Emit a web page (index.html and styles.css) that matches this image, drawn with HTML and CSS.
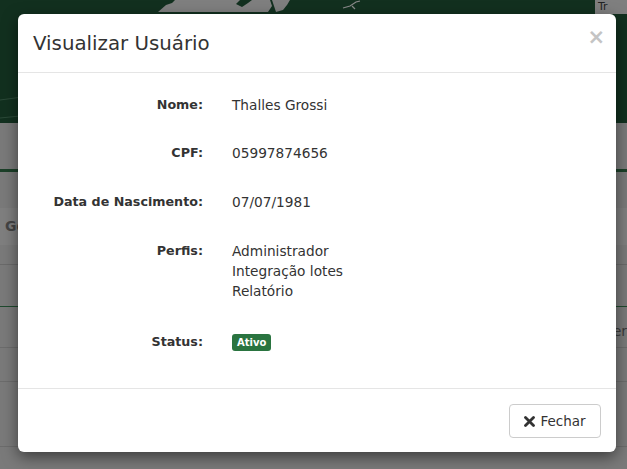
FILE: index.html
```html
<!DOCTYPE html>
<html lang="pt-BR">
<head>
<meta charset="utf-8">
<title>Visualizar Usuário</title>
<link rel="stylesheet" href="styles.css">
</head>
<body>
<div class="page">
  <header class="hero">
    <svg class="map" width="627" height="123" viewBox="0 0 627 123">
      <path d="M158 12 L166 5 L172 3 L175 0 L240 0 L236 4 L242 7 L248 3 L252 0 L270 0 L272 6 L268 12 Z" fill="#7f7f7f"/>
      <path d="M272 0 L290 0 L287 5 L283 10 L276 12 L274 6 Z" fill="#7f7f7f"/>
      <path d="M343 8 L350 6 L356 2 L360 1 M352 6 L355 9" stroke="#8a8a8a" stroke-width="1.2" fill="none"/>
      <path d="M0 100 L30 96 M0 118 L20 116" stroke="#2c4a39" stroke-width="1" fill="none"/>
    </svg>
    <div class="tab">Tr</div>
  </header>
  <div class="strip"></div>
  <div class="navline"></div>
  <div class="gap1"></div>
  <div class="thead">Ge</div>
  <div class="row r1"></div>
  <div class="row r2 green"></div>
  <div class="row r3"><span class="cell-r">er</span></div>
  <div class="row r4"></div>
  <div class="row r5"></div>
</div>

<div class="modal">
  <div class="modal-header">
    <h4 class="modal-title">Visualizar Usuário</h4>
    <span class="close">×</span>
  </div>
  <div class="modal-body">
    <div class="field">
      <div class="label">Nome:</div>
      <div class="value">Thalles Grossi</div>
    </div>
    <div class="field">
      <div class="label">CPF:</div>
      <div class="value">05997874656</div>
    </div>
    <div class="field">
      <div class="label">Data de Nascimento:</div>
      <div class="value">07/07/1981</div>
    </div>
    <div class="field">
      <div class="label">Perfis:</div>
      <div class="value">Administrador<br>Integração lotes<br>Relatório</div>
    </div>
    <div class="field field-status">
      <div class="label">Status:</div>
      <div class="value"><span class="badge">Ativo</span></div>
    </div>
  </div>
  <div class="modal-footer">
    <button class="btn" type="button">
      <svg class="btn-icon" width="11" height="11" viewBox="0 0 11 11"><path d="M1.5 1.5 L9.5 9.5 M9.5 1.5 L1.5 9.5" stroke="#333" stroke-width="2.8" stroke-linecap="round"/></svg>
      Fechar
    </button>
  </div>
</div>
</body>
</html>
```

FILE: styles.css
```css
* { box-sizing: border-box; }
html, body { margin: 0; padding: 0; }
body {
  width: 627px;
  height: 469px;
  overflow: hidden;
  background: #7a7a7a;
  font-family: "DejaVu Sans", sans-serif;
  color: #333;
  position: relative;
}
.page { display: flex; flex-direction: column; }
.hero {
  height: 123px;
  background: #12301f;
  position: relative;
}
.map { display: block; }
.tab {
  position: absolute;
  right: 0;
  top: 0;
  width: 32px;
  height: 14px;
  background: #7f7f7f;
  color: #222;
  font-size: 11px;
  line-height: 13px;
  padding-left: 3px;
}
.strip { height: 46px; background: #7a7a7a; }
.navline { height: 3px; background: #1c4029; }
.gap1 { height: 36px; background: #7a7a7a; }
.thead {
  height: 37px;
  background: #7f7f7f;
  color: #444;
  font-weight: bold;
  font-size: 14px;
  line-height: 37px;
  padding-left: 5px;
}
.row { border-bottom: 1px solid #6c6c6c; position: relative; }
.r1 { height: 20px; border-bottom-color: #6a6a6a; }
.r2 { height: 42px; border-bottom: 1px solid #1f4a2e; }
.r3 { height: 41px; }
.r4 { height: 34px; }
.r5 { height: 65px; }
.cell-r {
  position: absolute;
  right: 0;
  top: 16px;
  color: #3a3a3a;
  font-size: 14px;
}

.modal {
  position: absolute;
  left: 18px;
  top: 14px;
  width: 598px;
  height: 438px;
  background: #fff;
  border-radius: 6px;
  box-shadow: 0 5px 15px rgba(0,0,0,0.5);
  display: flex;
  flex-direction: column;
}
.modal-header {
  height: 59px;
  border-bottom: 1px solid #e5e5e5;
  padding: 0 15px;
  display: flex;
  align-items: center;
  justify-content: space-between;
}
.modal-title {
  margin: 0;
  font-size: 19.8px;
  font-weight: normal;
  color: #333;
}
.close {
  font-size: 21px;
  font-weight: bold;
  color: #c4c4c4;
  line-height: 1;
  margin-top: -12px;
  margin-right: -4px;
}
.modal-body {
  flex: 1;
  padding: 21.5px 15px 0;
  display: flex;
  flex-direction: column;
  gap: 28.8px;
  font-size: 13.7px;
  border-bottom: 1px solid #e5e5e5;
}
.field { display: flex; line-height: 20px; }
.field-status { margin-top: 2px; }
.label {
  width: 170px;
  text-align: right;
  font-weight: bold;
  font-size: 12.7px;
}
.value { margin-left: 29px; }
.badge {
  display: inline-block;
  background: #2a7440;
  color: #fff;
  font-weight: bold;
  font-size: 10px;
  line-height: 17px;
  height: 17px;
  padding: 0 5px;
  border-radius: 3px;
  vertical-align: top;
  margin-top: 2px;
}
.modal-footer {
  height: 63px;
  padding: 15px;
  display: flex;
  justify-content: flex-end;
  align-items: flex-start;
}
.btn {
  height: 34px;
  width: 92px;
  background: #fff;
  border: 1px solid #ccc;
  border-radius: 4px;
  font-family: inherit;
  font-size: 13.5px;
  color: #333;
  display: flex;
  align-items: center;
  justify-content: center;
  gap: 5px;
  padding: 0;
}
.btn-icon { display: block; }
```
